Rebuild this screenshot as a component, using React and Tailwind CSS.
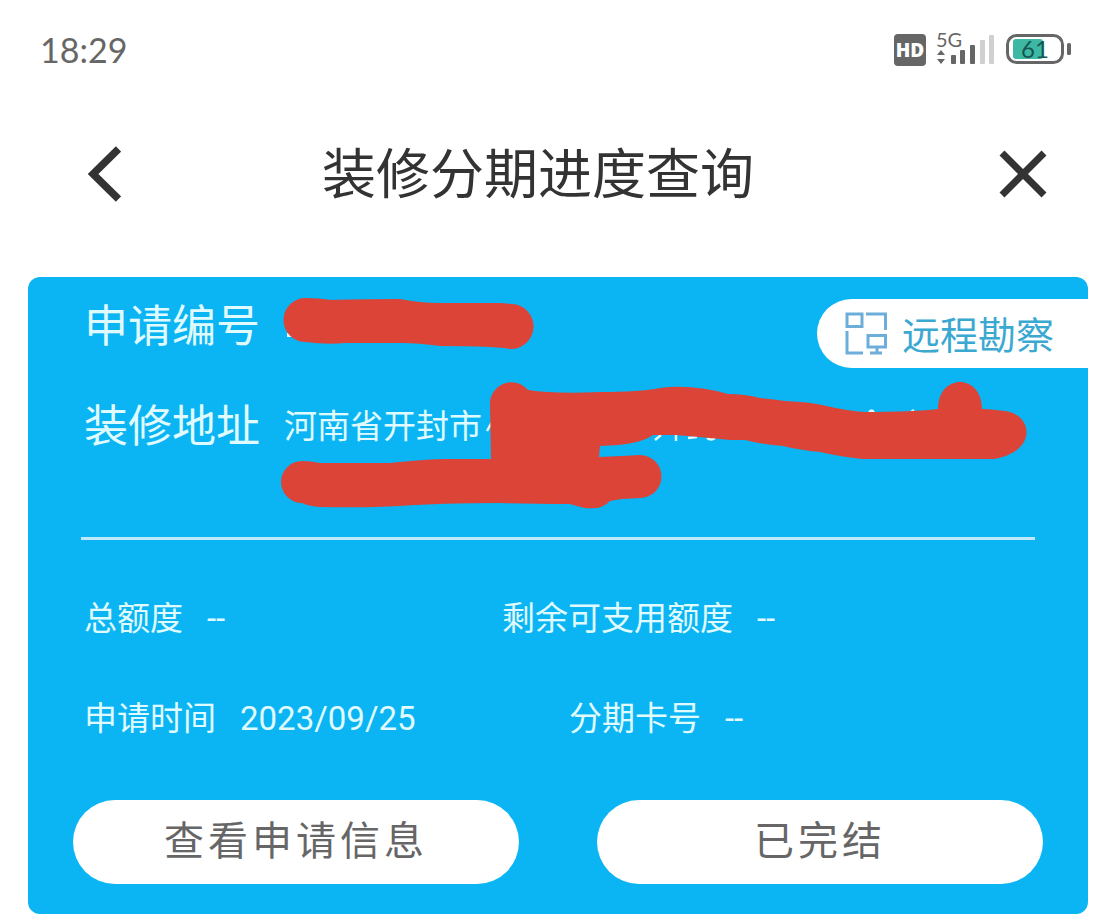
import React from "react";

const StatusBar = () => {
  return (
    <div className="flex items-center justify-between h-[100px] pl-10 pr-11 text-[#666666]">
      <time className="font-['Lato',sans-serif] text-[34px] leading-10">18:29</time>

      <div className="flex items-center gap-[10px]">
        <div className="flex items-center justify-center w-8 h-8 rounded bg-[#666666] text-white font-['Open_Sans',sans-serif] font-extrabold text-[19px] leading-8">
          HD
        </div>
        <div className="relative w-[60px] h-10">
          <span className="absolute left-0 top-[-3px] font-['Lato',sans-serif] text-[20px] leading-6">5G</span>
          <svg className="w-[60px] h-10" viewBox="0 0 60 40" aria-hidden="true">
            <path d="M5 20l4 5H1zM5 34l-4-5h8z" fill="#666666" />
            <rect x="15" y="25" width="5" height="9" rx="1" fill="#666666" />
            <rect x="24" y="20" width="5" height="14" rx="1" fill="#666666" />
            <rect x="34" y="15" width="5" height="19" rx="1" fill="#666666" />
            <rect x="44" y="10" width="5" height="24" rx="1" fill="#d0d0d0" />
            <rect x="53" y="5" width="5" height="29" rx="1" fill="#d0d0d0" />
          </svg>
        </div>
        <svg className="w-[66px] h-8" viewBox="0 0 66 32" role="img" aria-label="61%">
          <rect x="1.5" y="1.5" width="55" height="27" rx="9" fill="#ffffff" stroke="#666666" strokeWidth="3" />
          <rect x="7" y="5" width="30" height="20" rx="3" fill="#3db8a5" />
          <rect x="61" y="9" width="4" height="12" rx="1.5" fill="#666666" />
          <text x="29" y="24" fontSize="24" textAnchor="middle" fill="#16564f" className="font-['Lato',sans-serif]">
            61
          </text>
        </svg>
      </div>
    </div>
  );
};

const Header = () => {
  return (
    <header className="flex items-center h-[148px] text-[#333333]">
      <button type="button" aria-label="返回" className="pl-[88px]">
        <svg className="w-[33px] h-14" viewBox="0 0 33 56" fill="none" stroke="currentColor" strokeWidth="7.5">
          <path d="M30.500 3L5 28L30.500 53" />
        </svg>
      </button>
      <h1 className="flex-1 pt-1 text-center text-[54px] leading-[72px]">装修分期进度查询</h1>
      <button type="button" aria-label="关闭" className="pl-11 pr-[69px]">
        <svg className="w-12 h-12" viewBox="0 0 48 48" fill="none" stroke="currentColor" strokeWidth="7">
          <path d="M3 3L45 45M45 3L3 45" />
        </svg>
      </button>
    </header>
  );
};

const Field = ({ label, value, className }) => {
  return (
    <div className={`flex gap-6 ${className || ""}`}>
      <dt className="text-[33px]">{label}</dt>
      <dd className="text-[33px]">{value}</dd>
    </div>
  );
};

// Marker strokes that hide the private parts of the number and address
const Redaction = () => {
  return (
    <svg
      className="absolute left-0 top-0 w-[1060px] h-[250px] pointer-events-none"
      viewBox="28 277 1060 250"
      aria-hidden="true"
    >
      <path d="M287 333h5v4h-5z" fill="#e0fbff" />
      <path
        d="M487 431l5-9M655 440l6-5M676 433v8M688 438l9-1M707 438q4 3 8 0M869 412l3-2M872 410l2 3M911 412l3-2"
        fill="none"
        stroke="#e0fbff"
        strokeWidth="2.500"
      />
      <g fill="#dc4437">
        <path d="M306 298Q318 298 332 300Q350 299 400 299Q420 303 440 303H500L512 304A22.500 22.500 0 0 1 510 349Q496 346 440 346Q418 343 402 343H345Q328 345 305 342A22 22 0 0 1 306 298Z" />
        <path d="M490 405A21.500 21.500 0 0 1 528 390Q555 394 600 392Q640 392 660 388Q692 384 728 394Q745 394 760 398Q778 400 785 401Q810 402 822 405Q848 411 865 412Q915 412 938 409C938 373 982 373 982 409Q990 409 1005 411C1032 414 1039 451 994 459H862Q842 457 820 452Q800 450 783 446Q765 445 745 440H730Q700 437 675 435H653Q640 445 600 446L599 457L622 456L640 455A21.500 21.500 0 0 1 640 498L622 499Q615 500 610 501Q602 510 585 508Q573 505 570 504Q530 504 500 503Q440 503 400 506Q365 508 320 507Q308 506 302 503A21 21 0 0 1 302 461Q312 461 320 463H390Q430 459 445 459H491Z" />
      </g>
    </svg>
  );
};

const SurveyIcon = () => {
  return (
    <svg className="w-[43px] h-[43px]" viewBox="0 0 43 43" fill="none" stroke="#6caed9" strokeWidth="3">
      <rect x="2" y="2" width="15" height="12.500" />
      <path d="M21 2h19.500v16M2 19V41h16" />
      <rect x="23" y="23.500" width="17.500" height="11.500" />
      <path d="M32 35v6M25 41h12" />
    </svg>
  );
};

export default function App() {
  return (
    <main className="bg-white font-['Roboto','Noto_Sans_CJK_SC',sans-serif]">
      <StatusBar />
      <Header />

      <section className="relative mx-7 mt-[29px] pt-[22px] pb-[30px] rounded-xl bg-[#0bb5f3] text-[#e0fbff] leading-[56px]">
        <dl>
          <div className="flex items-start justify-between pl-14">
            <dt className="text-[44px]">申请编号</dt>
            <dd>
              <button
                type="button"
                className="flex items-center gap-[14px] h-[69px] pl-7 pr-[34px] rounded-l-full bg-white text-[#3ba8d2] text-[38px]"
              >
                <SurveyIcon />
                <span className="pt-1">远程勘察</span>
              </button>
            </dd>
          </div>
          <div className="flex gap-6 h-[138px] mt-[31px] pl-14">
            <dt className="text-[44px]">装修地址</dt>
            <dd className="text-[33px]">河南省开封市</dd>
          </div>
        </dl>

        <hr className="ml-[53px] mr-[53px] border-t-[3px] border-[#bfe8f8]" />

        <dl className="mt-[51px] pl-14">
          <div className="flex">
            <Field label="总额度" value="--" className="w-[418px]" />
            <Field label="剩余可支用额度" value="--" />
          </div>
          <div className="flex mt-11">
            <Field label="申请时间" value="2023/09/25" className="w-[485px]" />
            <Field label="分期卡号" value="--" />
          </div>
        </dl>

        <div className="flex gap-[78px] mt-[53px] mx-[45px] text-[40px] text-[#666666]">
          <button type="button" className="flex-1 h-[84px] rounded-full bg-white tracking-widest">
            查看申请信息
          </button>
          <button type="button" className="flex-1 h-[84px] rounded-full bg-white tracking-widest">
            已完结
          </button>
        </div>

        <Redaction />
      </section>
    </main>
  );
}
